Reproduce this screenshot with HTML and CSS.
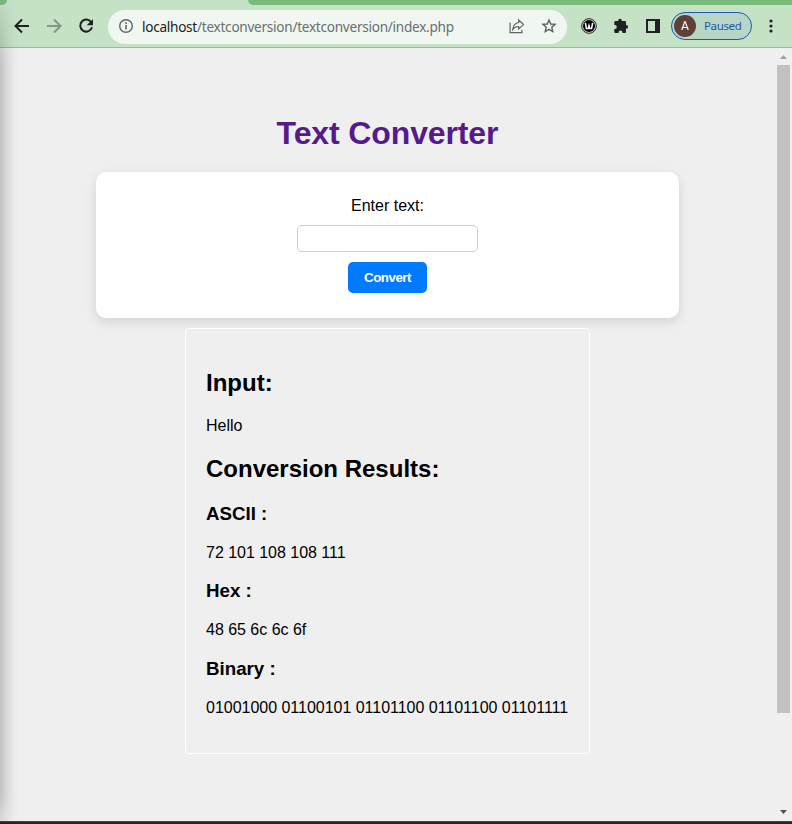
FILE: index.html
```html
<!DOCTYPE html>
<html lang="en">
<head>
<meta charset="utf-8">
<title>Text Converter</title>
<link rel="stylesheet" href="styles.css">
</head>
<body>
<div class="window">
  <header class="chrome">
    <div class="tabstrip"><span class="tab-left"></span><span class="tab-right"></span></div>
    <div class="toolbar">
      <nav class="nav">
        <svg width="16" height="16" viewBox="0 0 16 16" fill="none" stroke="#202124" stroke-width="2"><path d="M15 8H2.5M8 1.5 1.5 8 8 14.5"/></svg>
        <svg width="16" height="16" viewBox="0 0 16 16" fill="none" stroke="#829784" stroke-width="2"><path d="M1 8H13.5M8 1.5 14.5 8 8 14.5"/></svg>
        <svg width="16" height="16" viewBox="0 0 16 16"><path d="M13.2 4.2A6 6 0 1 0 14 9.3" fill="none" stroke="#202124" stroke-width="2"/><path d="M15 1v6.3H8.7z" fill="#202124"/></svg>
      </nav>
      <div class="omnibox">
        <svg class="info" width="16" height="16" viewBox="0 0 16 16"><circle cx="8" cy="8" r="6.3" fill="none" stroke="#5f6368" stroke-width="1.4"/><path d="M7.2 7h1.6v4.5H7.2zM7.2 4.3h1.6v1.6H7.2z" fill="#5f6368"/></svg>
        <span class="url"><b>localhost</b>/textconversion/textconversion/index.php</span>
        <svg class="share" width="16" height="16" viewBox="0 0 16 16" fill="none" stroke="#5f6368" stroke-width="1.2"><path d="M1.1 4.5v10.2h11.8v-3M9.7 2 14.5 6.6 9.7 11V8.5C7 8.4 5.3 9.3 3.8 11.3 4.2 7.7 6 5 9.7 4.5z"/></svg>
        <svg class="star" width="16" height="16" viewBox="0 0 16 16" fill="none" stroke="#5f6368" stroke-width="1.4"><path d="m8 2 1.7 4 4.4.4-3.3 2.9 1 4.3L8 11.3l-3.8 2.3 1-4.3-3.3-2.9 4.4-.4z"/></svg>
      </div>
      <div class="actions">
        <svg width="16" height="16" viewBox="0 0 16 16"><circle cx="8" cy="8" r="7.3" fill="#ddd" stroke="#222" stroke-width="1"/><circle cx="8" cy="8" r="6" fill="#000"/><path d="M4.4 4.8 5.4 10.4H7.2L8 7.5 8.8 10.4H10.6L11.6 4.8" fill="none" stroke="#fff" stroke-width="1.5"/></svg>
        <svg width="16" height="16" viewBox="0 0 16 16" fill="#202124"><path d="M2.3 3H5.2V2.6a1.8 1.8 0 0 1 3.6 0V3H12q1 0 1 1v3.1h.3a1.8 1.8 0 0 1 0 3.6H13V14q0 1-1 1H9.4v-.7a1.9 1.9 0 0 0-3.8 0v.7H2.3q-1 0-1-1v-3.1h.6a1.9 1.9 0 0 0 0-3.8h-.6V4q0-1 1-1z"/></svg>
        <svg width="16" height="16" viewBox="0 0 16 16"><path d="M1 1h14v14H1zM3 3v10h7V3z" fill="#202124" fill-rule="evenodd"/></svg>
      </div>
      <div class="profile"><span class="avatar">A</span><span class="state">Paused</span></div>
      <svg class="more" width="4" height="14" viewBox="0 0 4 14" fill="#202124"><circle cx="2" cy="2" r="1.6"/><circle cx="2" cy="7" r="1.6"/><circle cx="2" cy="12" r="1.6"/></svg>
    </div>
  </header>
  <div class="viewport">
    <main class="page">
      <h1>Text Converter</h1>
      <form class="card">
        <label for="text">Enter text:</label>
        <input id="text" type="text">
        <button type="button">Convert</button>
      </form>
      <section class="results">
        <h2>Input:</h2>
        <p>Hello</p>
        <h2>Conversion Results:</h2>
        <h3>ASCII :</h3>
        <p>72 101 108 108 111</p>
        <h3>Hex :</h3>
        <p>48 65 6c 6c 6f</p>
        <h3>Binary :</h3>
        <p>01001000 01100101 01101100 01101100 01101111</p>
      </section>
    </main>
    <div class="scrollbar">
      <svg width="17" height="17" viewBox="0 0 17 17"><path d="M5 11l3.5-4 3.5 4z" fill="#a3a3a3"/></svg>
      <div class="thumb"></div>
      <svg width="17" height="17" viewBox="0 0 17 17"><path d="M5 6l3.5 4L12 6z" fill="#505050"/></svg>
    </div>
  </div>
  <div class="taskbar"></div>
  <div class="edge-shadow"></div>
</div>
</body>
</html>
```
FILE: styles.css
```css
* { box-sizing: border-box; }
body { margin: 0; font-family: "Liberation Sans", Arial, sans-serif; font-size: 16px; color: #000; }
svg { display: block; flex: none; }
.window { position: relative; width: 792px; height: 824px; display: flex; flex-direction: column; overflow: hidden; }

.chrome { height: 48px; background: #c5e1c6; border-bottom: 1px solid #a0b7a1; flex: none; }
.tabstrip { height: 5px; display: flex; justify-content: space-between; }
.tab-left { width: 7px; background: #7aba7b; border-bottom-right-radius: 7px; }
.tab-right { width: 544px; background: #7aba7b; border-bottom-left-radius: 8px; }
.toolbar { height: 42px; display: flex; align-items: center; padding-left: 14px; }
.nav { display: flex; gap: 16px; }
.omnibox { width: 459px; height: 34px; margin: 1px 0 0 14px; border-radius: 17px; background: #f0f7f1; display: flex; align-items: center; padding: 0 10px; }
.omnibox svg { margin-bottom: 1px; }
.url { margin-left: 8px; font: 13.6px/20px "Noto Sans", sans-serif; letter-spacing: -0.27px; color: #696e70; white-space: nowrap; }
.url b { font-weight: 400; color: #202124; }
.share { margin-left: auto; }
.star { margin-left: 16px; }
.actions { display: flex; gap: 16px; margin-left: 14px; }
.profile { width: 81px; height: 28px; margin-left: 10px; border: 1px solid #1f57ad; border-radius: 14px; background: #b7d6c6; display: flex; align-items: center; padding-left: 2px; font-family: "Noto Sans", sans-serif; }
.avatar { width: 22px; height: 22px; border-radius: 50%; background: #5d4037; color: #fff; font: 12px/22px Roboto, sans-serif; text-align: center; }
.state { margin-left: 8px; font-size: 11.5px; line-height: 22px; letter-spacing: -0.35px; color: #1f57ad; }
.more { margin-left: 17px; }

.viewport { flex: 1; min-height: 0; display: flex; background: #efefef; }
.page { flex: 1; display: flex; flex-direction: column; align-items: center; padding-top: 67px; }
h1 { margin: 0; font-size: 32px; line-height: 36px; color: #551a8b; letter-spacing: -0.12px; }
.card { width: 583px; height: 146px; margin-top: 21px; padding-top: 25px; border-radius: 10px; background: #fff; box-shadow: 0 4px 12px rgba(0, 0, 0, 0.12); display: flex; flex-direction: column; align-items: center; }
.card label { line-height: 18px; }
.card input { width: 181px; height: 27px; margin: 10px 0 0; border: 1px solid #ccc; border-radius: 5px; background: #fff; }
.card button { width: 79px; height: 31px; margin: 10px 0 0; padding: 0; border: 0; border-radius: 5px; background: #007bff; color: #fff; font: bold 13.33px "Liberation Sans", sans-serif; letter-spacing: -0.5px; }
.results { width: 405px; height: 426px; margin-top: 10px; padding: 20px; border: 1px solid #fff; border-radius: 4px; display: flow-root; white-space: nowrap; }
.results h2 { font-size: 24px; line-height: 28px; margin: 19.92px 0; }
.results h3 { font-size: 18.72px; line-height: 22px; margin: 18.72px 0; }
.results p { line-height: 18px; margin: 19px 0 18.72px; letter-spacing: -0.02px; }

.scrollbar { width: 17px; background: #f0f0f0; display: flex; flex-direction: column; }
.thumb { width: 13px; height: 648px; margin: 0 auto auto 2px; background: #c1c1c1; }
.taskbar { height: 3px; flex: none; background: #292322; border-top: 1px solid #454546; }
.edge-shadow { position: absolute; left: 0; top: 0; width: 20px; height: 821px; background: linear-gradient(to right, rgba(0, 0, 0, 0.19), rgba(0, 0, 0, 0.09) 35%, rgba(0, 0, 0, 0.025) 70%, transparent); mask-image: linear-gradient(to bottom, rgba(0, 0, 0, 0.15), #000 65px, #000 795px, rgba(0, 0, 0, 0.5)); }
```
